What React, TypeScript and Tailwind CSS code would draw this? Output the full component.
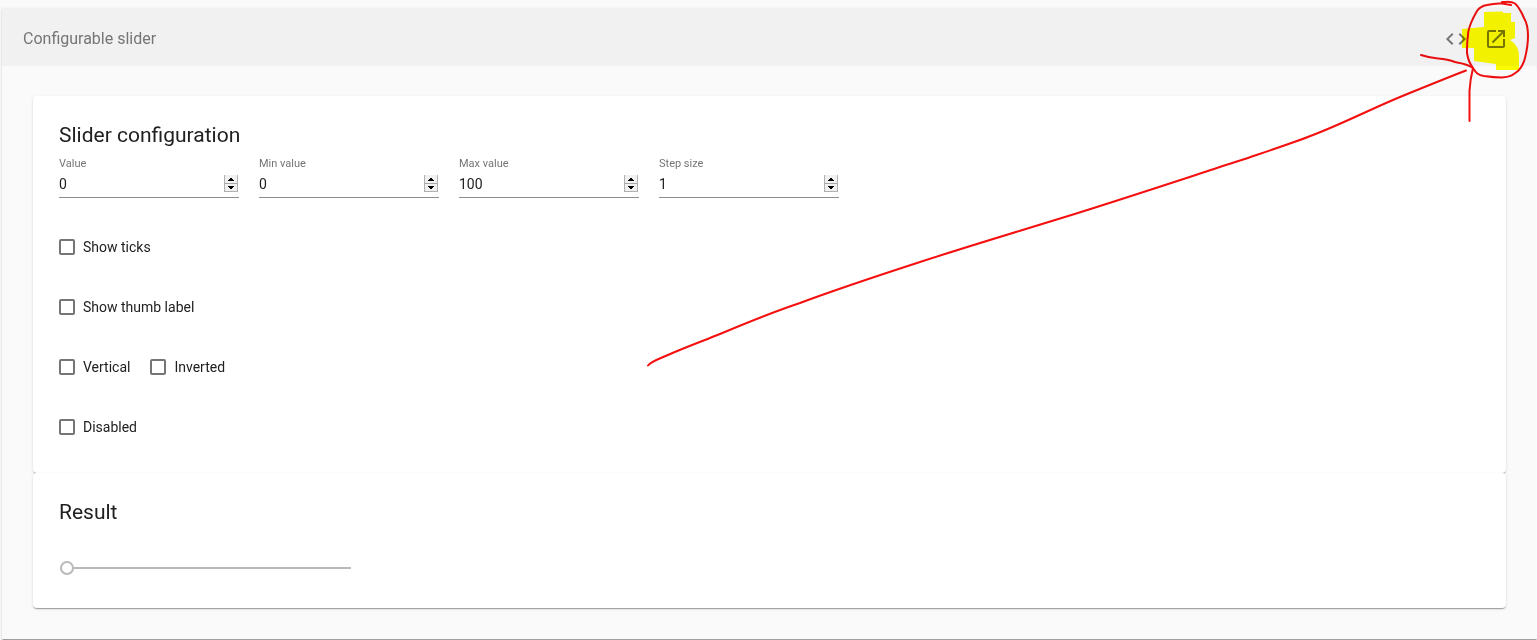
import { useState } from "react";
import { MdCode, MdOpenInNew } from "react-icons/md";

interface NumberFieldProps {
  id: string;
  label: string;
  value: number;
  onChange: (value: number) => void;
}

interface CheckFieldProps {
  label: string;
  checked: boolean;
  onChange: (checked: boolean) => void;
}

function NumberField({ id, label, value, onChange }: NumberFieldProps) {
  return (
    <div className="w-[180px]">
      <label htmlFor={id} className="block text-[11px] leading-5 text-[#757575]">
        {label}
      </label>
      <div className="flex h-6 items-start border-b border-[#8c8c8c]">
        <input
          id={id}
          type="number"
          value={value}
          onChange={(e) => onChange(Number(e.target.value))}
          className="h-5 min-w-0 flex-1 appearance-none bg-transparent text-sm leading-5 text-[#212121] outline-none [-moz-appearance:textfield] [&::-webkit-inner-spin-button]:appearance-none"
        />
        <div className="mt-px mr-px flex w-[14px] flex-col border-x border-[#b0b0b0] bg-[#f0f0f0]">
          <button
            type="button"
            aria-label={`Increase ${label}`}
            onClick={() => onChange(value + 1)}
            className="flex h-[9px] items-center justify-center border-b border-[#a8a8a8]"
          >
            <svg viewBox="0 0 6 3" className="h-[3px] w-[6px]">
              <path d="M2 0H4V1H5V2H6V3H0V2H1V1H2z" fill="#000" />
            </svg>
          </button>
          <button
            type="button"
            aria-label={`Decrease ${label}`}
            onClick={() => onChange(value - 1)}
            className="flex h-2 items-center justify-center border-b border-[#b0b0b0]"
          >
            <svg viewBox="0 0 6 3" className="h-[3px] w-[6px]">
              <path d="M2 3H4V2H5V1H6V0H0V1H1V2H2z" fill="#000" />
            </svg>
          </button>
        </div>
      </div>
    </div>
  );
}

function CheckField({ label, checked, onChange }: CheckFieldProps) {
  return (
    <label className="flex items-center gap-2 text-sm">
      <input
        type="checkbox"
        checked={checked}
        onChange={(e) => onChange(e.target.checked)}
        className="h-4 w-4 appearance-none rounded-xs border-2 border-[#757575] checked:bg-[#757575]"
      />
      {label}
    </label>
  );
}

// Hand-drawn marker, circle and arrow pointing at the "open" button
function Annotation() {
  return (
    <svg
      viewBox="640 0 897 380"
      className="pointer-events-none absolute top-0 right-0 h-[380px] w-[897px] mix-blend-multiply"
      aria-hidden="true"
    >
      <path
        d="M1484 12L1503 11.5V13H1511V22H1515V38L1510 40Q1518 45 1519 54V70H1496V64L1474 61V48H1462V29L1484 27Z"
        fill="#ffff00"
      />
      <g fill="none" stroke="#f50f0f" strokeWidth="2" strokeLinecap="round" strokeLinejoin="round">
        <path d="M1511 5L1502 3.5C1496 3 1491 4 1487 5C1481 6 1479 8 1477 11C1474 16 1473 18 1471 23C1469 28 1468 31 1468 35C1467 42 1467 48 1467 53C1468 60 1470 64 1473 68C1476 73 1478 75 1484 76C1491 77 1495 77.500 1502 77.500C1510 77 1513 75 1518 71C1522 67 1524 62 1525 58C1527 50 1528 44 1528 36C1528 29 1527 23 1524 18C1521 11 1519 7 1515 3.500C1511 1 1508 2 1502 2" />
        <path d="M1421 55C1427 57 1431 58 1438 58.500C1445 59 1450 60 1455 62C1461 63 1468 64 1473 68C1471 76 1470 82 1469.500 91V121" />
        <path d="M648 365.500C650 363 656 360 662 357.500C681 349 700 342 720 334C746 323 773 312 800 303C840 288 880 275 920 262C966 247 1013 233 1060 218.500C1120 200 1180 180 1240 160.500C1265 152 1290 144 1313 135C1342 124 1371 109 1400 97C1422 88 1444 79 1466 70.500" />
      </g>
    </svg>
  );
}

const cardClass =
  "rounded bg-white px-[26px] pt-6 pb-4 shadow-[0_2px_1px_-1px_rgba(0,0,0,0.2),0_1px_1px_0_rgba(0,0,0,0.14),0_1px_3px_0_rgba(0,0,0,0.12)]";

export default function App() {
  const [value, setValue] = useState(0);
  const [min, setMin] = useState(0);
  const [max, setMax] = useState(100);
  const [step, setStep] = useState(1);
  const [showTicks, setShowTicks] = useState(false);
  const [thumbLabel, setThumbLabel] = useState(false);
  const [vertical, setVertical] = useState(false);
  const [inverted, setInverted] = useState(false);
  const [disabled, setDisabled] = useState(false);

  return (
    <div className="relative isolate flow-root min-h-screen overflow-hidden bg-[#fafafa] font-['Roboto',sans-serif] text-[#212121]">
      <section className="mt-2 ml-[2px] bg-[#fafafa] shadow-[0_2px_1px_-1px_rgba(0,0,0,0.2),0_1px_1px_0_rgba(0,0,0,0.14),0_1px_3px_0_rgba(0,0,0,0.12)]">
        <header className="flex h-[58px] items-center justify-between bg-[#f1f1f1] px-[21px] pt-1 text-[#757575]">
          <h1 className="text-base">Configurable slider</h1>
          <div className="flex">
            <button type="button" aria-label="View source" className="flex h-10 w-10 items-center justify-center">
              <MdCode size={24} />
            </button>
            <button type="button" aria-label="Open example" className="flex h-10 w-10 items-center justify-center">
              <MdOpenInNew size={24} />
            </button>
          </div>
        </header>

        <div className="px-[31px] pt-[30px] pb-[31px]">
          <div className={cardClass}>
            <h2 className="mb-1 text-[21px] leading-[30px]">Slider configuration</h2>
            <div className="mb-[19px] flex flex-wrap gap-5">
              <NumberField id="value" label="Value" value={value} onChange={setValue} />
              <NumberField id="min" label="Min value" value={min} onChange={setMin} />
              <NumberField id="max" label="Max value" value={max} onChange={setMax} />
              <NumberField id="step" label="Step size" value={step} onChange={setStep} />
            </div>
            <div className="flex h-[60px] items-center">
              <CheckField label="Show ticks" checked={showTicks} onChange={setShowTicks} />
            </div>
            <div className="flex h-[60px] items-center">
              <CheckField label="Show thumb label" checked={thumbLabel} onChange={setThumbLabel} />
            </div>
            <div className="flex h-[60px] items-center gap-5">
              <CheckField label="Vertical" checked={vertical} onChange={setVertical} />
              <CheckField label="Inverted" checked={inverted} onChange={setInverted} />
            </div>
            <div className="flex h-[60px] items-center">
              <CheckField label="Disabled" checked={disabled} onChange={setDisabled} />
            </div>
          </div>

          <div className={cardClass}>
            <h2 id="result" className="text-[21px] leading-[30px]">Result</h2>
            <div className="mt-[17px] flex h-12 items-center">
              <input
                type="range"
                aria-labelledby="result"
                min={min}
                max={max}
                step={step}
                value={value}
                disabled={disabled}
                onChange={(e) => setValue(Number(e.target.value))}
                className="mx-px h-[14px] w-[291px] appearance-none bg-transparent [&::-webkit-slider-runnable-track]:h-[2px] [&::-webkit-slider-runnable-track]:bg-[#bababa] [&::-webkit-slider-thumb]:-mt-[6px] [&::-webkit-slider-thumb]:h-[14px] [&::-webkit-slider-thumb]:w-[14px] [&::-webkit-slider-thumb]:appearance-none [&::-webkit-slider-thumb]:rounded-full [&::-webkit-slider-thumb]:border-2 [&::-webkit-slider-thumb]:border-solid [&::-webkit-slider-thumb]:border-[#bababa] [&::-webkit-slider-thumb]:bg-white"
              />
            </div>
          </div>
        </div>
      </section>
      <Annotation />
    </div>
  );
}
